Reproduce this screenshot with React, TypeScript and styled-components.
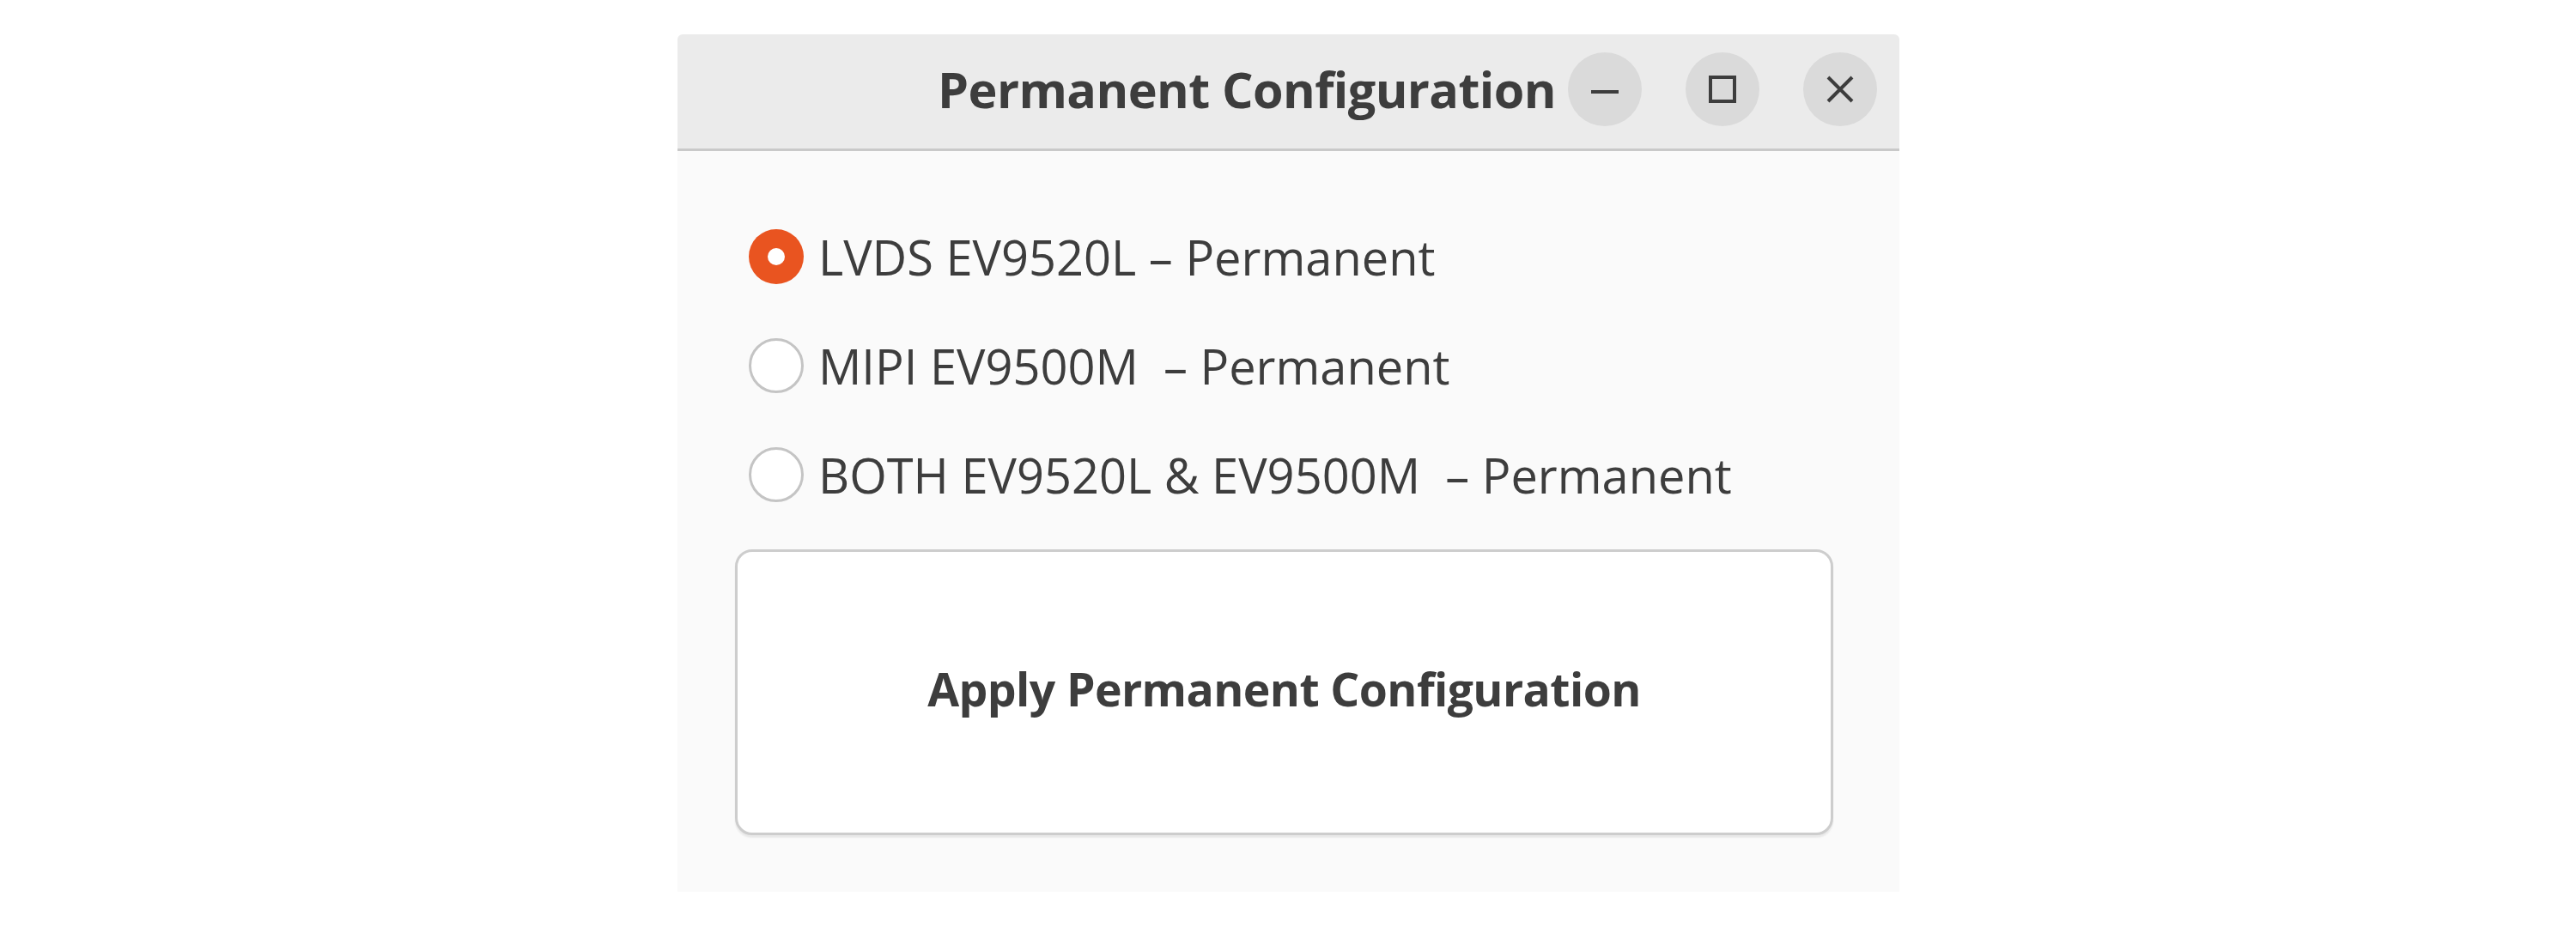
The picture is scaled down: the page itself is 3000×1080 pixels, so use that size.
import styled, { createGlobalStyle } from 'styled-components';
import { useState } from 'react';

const GlobalStyle = createGlobalStyle`
    html, body {
        margin: 0;
        padding: 0;
        background: #ffffff;
    }
    body {
        font-family: 'Open Sans', 'DejaVu Sans', sans-serif;
        color: #3d3d3d;
    }
`;

const Page = styled.div`
    width: 3000px;
    height: 1080px;
    padding: 40px 0 0 789px;
    box-sizing: border-box;
`;

const Window = styled.div`
    width: 1423px;
    display: flex;
    flex-direction: column;
    border-radius: 6px 6px 0 0;
    overflow: hidden;
`;

const TitleBar = styled.div`
    height: 136px;
    box-sizing: border-box;
    background: #ebebeb;
    border-bottom: 3px solid #c9c9c9;
    display: flex;
    align-items: center;
    justify-content: flex-end;
    padding: 0 26px 6px 0;
`;

const Title = styled.div`
    font-size: 57.5px;
    font-weight: 700;
    color: #3d3d3d;
    margin-right: 14px;
    letter-spacing: -0.6px;
`;

const WinButtons = styled.div`
    display: flex;
    gap: 51px;
`;

const WinButton = styled.button`
    width: 86px;
    height: 86px;
    border-radius: 50%;
    border: none;
    background: #dadada;
    padding: 0;
    display: flex;
    align-items: center;
    justify-content: center;
    color: #3d3d3d;
`;

const Body = styled.div`
    background: #fafafa;
    height: 863px;
    box-sizing: border-box;
    padding: 91px 77px 0 67px;
    display: flex;
    flex-direction: column;
`;

const Options = styled.div`
    display: flex;
    flex-direction: column;
    gap: 63px;
    padding-left: 16px;
`;

const Option = styled.label`
    display: flex;
    align-items: center;
    gap: 17px;
    height: 64px;
    cursor: pointer;
`;

const Radio = styled.span<{ $checked: boolean }>`
    width: 64px;
    height: 64px;
    border-radius: 50%;
    box-sizing: border-box;
    flex: none;
    display: flex;
    align-items: center;
    justify-content: center;
    background: ${({ $checked }) => ($checked ? '#e95420' : '#ffffff')};
    border: ${({ $checked }) => ($checked ? 'none' : '3px solid #c4c4c4')};
    &::after {
        content: '';
        width: 20px;
        height: 20px;
        border-radius: 50%;
        background: #ffffff;
        display: ${({ $checked }) => ($checked ? 'block' : 'none')};
    }
`;

const OptionText = styled.span`
    font-size: 56px;
    white-space: pre;
    color: #3d3d3d;
`;

const ApplyButton = styled.button`
    margin-top: 55px;
    height: 333px;
    width: 100%;
    background: #ffffff;
    border: 3px solid #cdcdcd;
    border-radius: 20px;
    box-shadow: 0 3px 2px rgba(0, 0, 0, 0.07);
    font-family: inherit;
    font-size: 53.5px;
    font-weight: 700;
    color: #3d3d3d;
    letter-spacing: -0.6px;
    padding: 0 0 8px 0;
`;

const options = [
    'LVDS EV9520L \u2013 Permanent',
    'MIPI EV9500M  \u2013 Permanent',
    'BOTH EV9520L & EV9500M  \u2013 Permanent',
];

export default function App() {
    const [selected, setSelected] = useState(0);

    return (
        <>
            <GlobalStyle />
            <Page>
                <Window>
                    <TitleBar>
                        <Title>Permanent Configuration</Title>
                        <WinButtons>
                            <WinButton aria-label="Minimize">
                                <svg width="34" height="34" viewBox="0 0 34 34">
                                    <path d="M1 20h32" stroke="currentColor" strokeWidth="4" />
                                </svg>
                            </WinButton>
                            <WinButton aria-label="Maximize">
                                <svg width="34" height="34" viewBox="0 0 34 34">
                                    <rect x="3" y="3" width="28" height="28" fill="none" stroke="currentColor" strokeWidth="4" />
                                </svg>
                            </WinButton>
                            <WinButton aria-label="Close">
                                <svg width="34" height="34" viewBox="0 0 34 34">
                                    <path d="M3 3l28 28M31 3L3 31" stroke="currentColor" strokeWidth="4" />
                                </svg>
                            </WinButton>
                        </WinButtons>
                    </TitleBar>
                    <Body>
                        <Options>
                            {options.map((text, i) => (
                                <Option key={text} onClick={() => setSelected(i)}>
                                    <Radio $checked={selected === i} />
                                    <OptionText>{text}</OptionText>
                                </Option>
                            ))}
                        </Options>
                        <ApplyButton>Apply Permanent Configuration</ApplyButton>
                    </Body>
                </Window>
            </Page>
        </>
    );
}
